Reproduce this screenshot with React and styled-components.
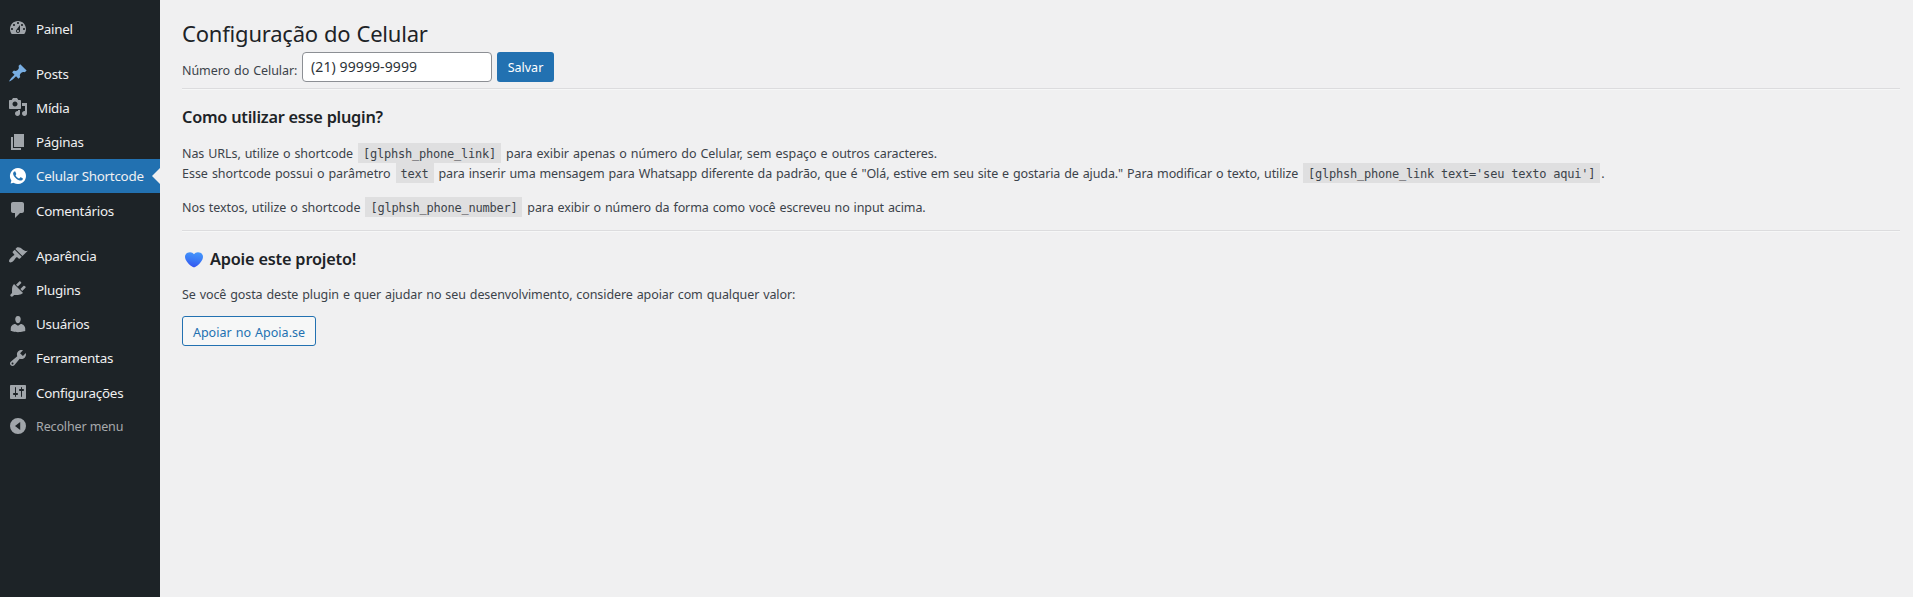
import React from 'react';
import styled, { createGlobalStyle } from 'styled-components';

const GlobalStyle = createGlobalStyle`
  * { box-sizing: border-box; }
  body {
    margin: 0;
    background: #f0f0f1;
    color: #3c434a;
    font-family: "Noto Sans", "Open Sans", sans-serif;
    font-size: 12.5px;
    line-height: 20px;
  }
`;

const Page = styled.div`
  display: flex;
  min-height: 100vh;
`;

const Sidebar = styled.nav`
  width: 160px;
  flex: none;
  padding-top: 12px;
  background: #1d2327;
`;

const MenuGroup = styled.div`
  display: flex;
  flex-direction: column;
  margin-bottom: 11px;
`;

const MenuItem = styled.a`
  position: relative;
  display: flex;
  height: 34px;
  padding-left: 8px;
  color: ${(p) => (p.$muted ? '#a7aaad' : '#f0f0f1')};
  background: ${(p) => (p.$active ? '#2271b1' : 'transparent')};
  font-size: ${(p) => (p.$muted ? '12.5px' : '13.4px')};
  letter-spacing: ${(p) => (p.$muted ? '-0.13px' : '-0.26px')};
  line-height: 34px;
  white-space: nowrap;
`;

const MenuIcon = styled.svg`
  width: 20px;
  height: 20px;
  margin: ${(p) => p.$top}px 8px 0 0;
  fill: ${(p) => p.$color};
  flex: none;
`;

const MenuLabel = styled.span`
  padding-top: ${(p) => p.$drop || 0}px;
`;

const ActiveArrow = styled.span`
  position: absolute;
  right: 0;
  top: 9px;
  border: 8px solid transparent;
  border-left: 0;
  border-right-color: #f0f0f1;
`;

const Content = styled.main`
  flex: 1;
  padding: 18px 13px 0 22px;
`;

const Title = styled.h1`
  margin: 0 0 4px;
  color: #1d2327;
  font-size: 22px;
  font-weight: 400;
  line-height: 30px;
  letter-spacing: -0.2px;
  word-spacing: 0.5px;
`;

const PhoneForm = styled.div`
  display: flex;
  height: 30px;
`;

const FieldLabel = styled.label`
  width: 120px;
  padding-top: 9px;
  letter-spacing: -0.06px;
  word-spacing: 0.8px;
  white-space: nowrap;
`;

const PhoneInput = styled.input`
  width: 190px;
  height: 30px;
  margin: 0 5px 0 0;
  padding: 0 8px 2px;
  border: 1px solid #8c8f94;
  border-radius: 4px;
  background: #fff;
  color: #2c3338;
  font: 14px "Noto Sans", sans-serif;
  letter-spacing: 0.1px;
`;

const SaveButton = styled.button`
  width: 57px;
  height: 30px;
  padding: 1px 0 0;
  border: 0;
  border-radius: 3px;
  background: #2271b1;
  color: #fff;
  font: 12.5px "Noto Sans", sans-serif;
`;

const Divider = styled.hr`
  margin: ${(p) => p.$top}px 0 15px;
  border: 0;
  border-top: 1px solid #dcdcde;
  border-bottom: 1px solid #f6f7f7;
`;

const Heading = styled.h2`
  display: flex;
  align-items: center;
  margin: 0 0 ${(p) => p.$bottom}px;
  color: #1d2327;
  font-size: 16.3px;
  font-weight: 600;
  line-height: 24px;
  letter-spacing: ${(p) => p.$track}px;
`;

const Heart = styled.svg`
  width: 24px;
  height: 24px;
  margin-right: 4px;
`;

const Paragraph = styled.p`
  margin: 0 0 ${(p) => p.$bottom}px;
  padding-top: 1px;
  white-space: nowrap;
`;

const Run = styled.span`
  letter-spacing: ${(p) => p.$track}px;
  word-spacing: 0.8px;
`;

const Code = styled.code`
  margin: 0 1px;
  padding: 4px 5px 2px;
  background: #dfdfe0;
  font: 12px/20px "DejaVu Sans Mono", monospace;
  letter-spacing: -0.224px;
`;

const SupportLink = styled.a`
  display: flex;
  align-items: center;
  justify-content: center;
  width: 134px;
  height: 30px;
  padding-top: 3px;
  border: 1px solid #2271b1;
  border-radius: 3px;
  background: #f6f7f7;
  color: #2271b1;
  letter-spacing: 0.03px;
  word-spacing: 0.7px;
`;

const icons = {
  dashboard: 'M3.76 16h12.48c1.1-1.37 1.76-3.11 1.76-5 0-4.42-3.58-8-8-8s-8 3.58-8 8c0 1.89.66 3.63 1.76 5zM10 4c.55 0 1 .45 1 1s-.45 1-1 1-1-.45-1-1 .45-1 1-1zM6 6c.55 0 1 .45 1 1s-.45 1-1 1-1-.45-1-1 .45-1 1-1zm8 0c.55 0 1 .45 1 1s-.45 1-1 1-1-.45-1-1 .45-1 1-1zm-5.37 5.55L12 7v6c0 1.1-.9 2-2 2s-2-.9-2-2c0-.57.24-1.08.63-1.45zM4 10c.55 0 1 .45 1 1s-.45 1-1 1-1-.45-1-1 .45-1 1-1zm12 0c.55 0 1 .45 1 1s-.45 1-1 1-1-.45-1-1 .45-1 1-1zm-5 3c0-.55-.45-1-1-1s-1 .45-1 1 .45 1 1 1 1-.45 1-1z',
  pin: 'M10.44 3.02l1.82-1.82 6.36 6.35-1.83 1.82c-1.05-.68-2.48-.57-3.41.36l-.75.75c-.92.93-1.04 2.35-.35 3.41l-1.83 1.82-2.41-2.41-2.8 2.79c-.42.42-3.38 2.71-3.8 2.29s1.86-3.39 2.28-3.81l2.79-2.79L4.1 9.36l1.83-1.82c1.05.69 2.48.57 3.4-.36l.75-.75c.93-.92 1.05-2.35.36-3.41z',
  media: 'M13 11V4c0-.55-.45-1-1-1h-1.67L9 1H5L3.67 3H2c-.55 0-1 .45-1 1v7c0 .55.45 1 1 1h10c.55 0 1-.45 1-1zM7 4.5c1.38 0 2.5 1.12 2.5 2.5S8.38 9.5 7 9.5 4.5 8.38 4.5 7 5.62 4.5 7 4.5zM14 6h5v10.5c0 1.38-1.12 2.5-2.5 2.5S14 17.88 14 16.5s1.12-2.5 2.5-2.5c.17 0 .34.02.5.05V9h-3V6zm-4 8.05V13h2v3.5c0 1.38-1.12 2.5-2.5 2.5S7 17.88 7 16.5 8.12 14 9.5 14c.17 0 .34.02.5.05z',
  pages: 'M6 15V2h10v13H6zm-1 1h8v2H3V5h2v11z',
  whatsapp: 'M16.8 5.7C14.4 2 9.5.9 5.7 3.2 2 5.5.8 10.5 3.2 14.2l.2.3-.8 3 3-.8.3.2c1.3.7 2.7 1.1 4.1 1.1 1.5 0 3-.4 4.3-1.2 3.7-2.4 4.8-7.3 2.5-11.1zm-2.1 7.7c-.4.6-.9 1-1.6 1.1-.4 0-.9.2-2.9-.6-1.7-.8-3.1-2.1-4.1-3.6-.6-.7-.9-1.6-1-2.5 0-.8.3-1.5.8-2 .2-.2.4-.3.6-.3H7c.2 0 .4 0 .5.4.2.5.7 1.7.7 1.8.1.1.1.3 0 .4.1.2 0 .4-.1.5-.1.1-.2.3-.3.4-.2.1-.3.3-.2.5.4.6.9 1.2 1.4 1.7.6.5 1.2.9 1.9 1.2.2.1.4.1.5-.1s.6-.7.8-.9c.2-.2.3-.2.5-.1l1.6.8c.2.1.4.2.5.3.1.3.1.7-.1 1z',
  comments: 'M5 2h9c1.1 0 2 .9 2 2v7c0 1.1-.9 2-2 2h-2l-5 5v-5H5c-1.1 0-2-.9-2-2V4c0-1.1.9-2 2-2z',
  appearance: 'M14.48 11.06L7.41 3.99l1.5-1.5c.5-.56 2.3-.47 3.51.32 1.21.8 1.43 1.28 2.91 2.1 1.18.64 2.45 1.26 4.45.85zm-.71.71L6.7 4.7 4.93 6.47c-.39.39-.39 1.02 0 1.41l1.06 1.06c.39.39.39 1.03 0 1.42-.6.6-1.43 1.11-2.21 1.69-.35.26-.7.53-1.01.84C1.43 14.23.4 16.08 1.4 17.07c.99 1 2.84-.03 4.18-1.36.31-.31.58-.66.85-1.02.57-.78 1.08-1.61 1.69-2.21.39-.39 1.02-.39 1.41 0l1.06 1.06c.39.39 1.02.39 1.41 0z',
  plugins: 'M13.11 4.36L9.87 7.6 8 5.73l3.24-3.24c.35-.34 1.05-.2 1.56.32.52.51.66 1.21.31 1.55zm-8 1.77l.91-1.12 9.01 9.01-1.19.84c-.71.71-2.63 1.16-3.82 1.16H6.14L4.9 17.26c-.59.59-1.54.59-2.12 0-.59-.58-.59-1.53 0-2.12l1.24-1.24v-3.88c0-1.13.4-3.19 1.09-3.89zm7.26 3.97l3.24-3.24c.34-.35 1.04-.21 1.55.31.52.51.66 1.21.31 1.55l-3.24 3.25z',
  users: 'M10 9.25c-2.27 0-2.73-3.44-2.73-3.44C7 4.02 7.82 2 9.97 2c2.16 0 2.98 2.02 2.71 3.81 0 0-.41 3.44-2.68 3.44zm0 2.57L12.72 10c2.39 0 4.52 2.33 4.52 4.53v2.49s-3.65 1.13-7.24 1.13c-3.65 0-7.24-1.13-7.24-1.13v-2.49c0-2.25 1.94-4.48 4.47-4.48z',
  tools: 'M16.68 9.77c-1.34 1.34-3.3 1.67-4.95.99l-5.41 6.52c-.99.99-2.59.99-3.58 0s-.99-2.59 0-3.57l6.52-5.42c-.68-1.65-.35-3.61.99-4.95 1.28-1.28 3.12-1.62 4.72-1.06l-2.89 2.89 2.82 2.82 2.86-2.87c.53 1.58.18 3.39-1.08 4.65zM3.81 16.21c.4.39 1.04.39 1.43 0 .4-.4.4-1.04 0-1.43-.39-.4-1.03-.4-1.43 0-.39.39-.39 1.03 0 1.43z',
  settings: 'M18 16V4c0-.55-.45-1-1-1H3c-.55 0-1 .45-1 1v12c0 .55.45 1 1 1h14c.55 0 1-.45 1-1zM8 11h1c.55 0 1 .45 1 1s-.45 1-1 1H8v1.5c0 .28-.22.5-.5.5s-.5-.22-.5-.5V13H6c-.55 0-1-.45-1-1s.45-1 1-1h1V5.5c0-.28.22-.5.5-.5s.5.22.5.5V11zm5-2h-1c-.55 0-1-.45-1-1s.45-1 1-1h1V5.5c0-.28.22-.5.5-.5s.5.22.5.5V7h1c.55 0 1 .45 1 1s-.45 1-1 1h-1v5.5c0 .28-.22.5-.5.5s-.5-.22-.5-.5V9z',
  collapse: 'M10 2a8 8 0 1 0 0 16 8 8 0 0 0 0-16zM12.2 6v8L7 10z',
};

const menu = [
  [{ label: 'Painel', icon: 'dashboard', top: 6 }],
  [
    { label: 'Posts', icon: 'pin', top: 6, color: '#78aee2' },
    { label: 'Mídia', icon: 'media', top: 6 },
    { label: 'Páginas', icon: 'pages' },
    { label: 'Celular Shortcode', icon: 'whatsapp', active: true, color: '#fff' },
    { label: 'Comentários', icon: 'comments', drop: 1 },
  ],
  [
    { label: 'Aparência', icon: 'appearance', drop: 1 },
    { label: 'Plugins', icon: 'plugins', drop: 1 },
    { label: 'Usuários', icon: 'users', top: 8, drop: 1 },
    { label: 'Ferramentas', icon: 'tools', top: 8, drop: 1 },
    { label: 'Configurações', icon: 'settings', top: 8, drop: 2 },
    { label: 'Recolher menu', icon: 'collapse', top: 8, drop: 2, muted: true },
  ],
];

function AdminMenu() {
  return (
    <Sidebar>
      {menu.map((group, i) => (
        <MenuGroup key={i}>
          {group.map((item) => (
            <MenuItem key={item.label} $active={item.active} $muted={item.muted}>
              <MenuIcon viewBox="0 0 20 20" $top={item.top || 7} $color={item.color || '#a0a5aa'}>
                <path fillRule="evenodd" d={icons[item.icon]} />
              </MenuIcon>
              <MenuLabel $drop={item.drop}>{item.label}</MenuLabel>
              {item.active && <ActiveArrow />}
            </MenuItem>
          ))}
        </MenuGroup>
      ))}
    </Sidebar>
  );
}

export default function App() {
  return (
    <Page>
      <GlobalStyle />
      <AdminMenu />
      <Content>
        <Title>Configuração do Celular</Title>
        <PhoneForm>
          <FieldLabel htmlFor="phone">Número do Celular:</FieldLabel>
          <PhoneInput id="phone" defaultValue="(21) 99999-9999" />
          <SaveButton>Salvar</SaveButton>
        </PhoneForm>
        <Divider $top={6} />
        <Heading $bottom={14} $track={-0.24}>Como utilizar esse plugin?</Heading>
        <Paragraph $bottom={13}>
          <Run $track={-0.075}>Nas URLs, utilize o shortcode </Run>
          <Code>[glphsh_phone_link]</Code>
          <Run $track={-0.035}> para exibir apenas o número do Celular, sem espaço e outros caracteres.</Run>
          <br />
          <Run $track={-0.03}>Esse shortcode possui o parâmetro </Run>
          <Code>text</Code>
          <Run $track={-0.103}> para inserir uma mensagem para Whatsapp diferente da padrão, que é "Olá, estive em seu site e gostaria de ajuda." Para modificar o texto, utilize </Run>
          <Code>[glphsh_phone_link text='seu texto aqui']</Code>.
        </Paragraph>
        <Paragraph $bottom={12}>
          <Run $track={-0.06}>Nos textos, utilize o shortcode </Run>
          <Code>[glphsh_phone_number]</Code>
          <Run $track={-0.1}> para exibir o número da forma como você escreveu no input acima.</Run>
        </Paragraph>
        <Divider $top={12} />
        <Heading $bottom={13} $track={-0.19}>
          <Heart viewBox="0 0 24 24">
            <defs>
              <linearGradient id="heart" x1="0.6" y1="0" x2="0.4" y2="1">
                <stop offset="0" stopColor="#4596fb" />
                <stop offset="0.5" stopColor="#3a7af6" />
                <stop offset="1" stopColor="#3453f0" />
              </linearGradient>
            </defs>
            <path
              fill="url(#heart)"
              d="M12 7.2C10.8 5.2 7.9 4.6 5.6 5.7 3 6.9 2.4 9.8 3.6 12.4c1.5 3.2 4.5 6.1 7.3 7.6.7.4 1.5.4 2.2 0 2.8-1.5 5.8-4.4 7.3-7.6 1.2-2.6.6-5.5-2-6.7C16.1 4.6 13.2 5.2 12 7.2z"
            />
          </Heart>
          Apoie este projeto!
        </Heading>
        <Paragraph $bottom={11}>
          <Run $track={-0.093}>Se você gosta deste plugin e quer ajudar no seu desenvolvimento, considere apoiar com qualquer valor:</Run>
        </Paragraph>
        <SupportLink>Apoiar no Apoia.se</SupportLink>
      </Content>
    </Page>
  );
}
